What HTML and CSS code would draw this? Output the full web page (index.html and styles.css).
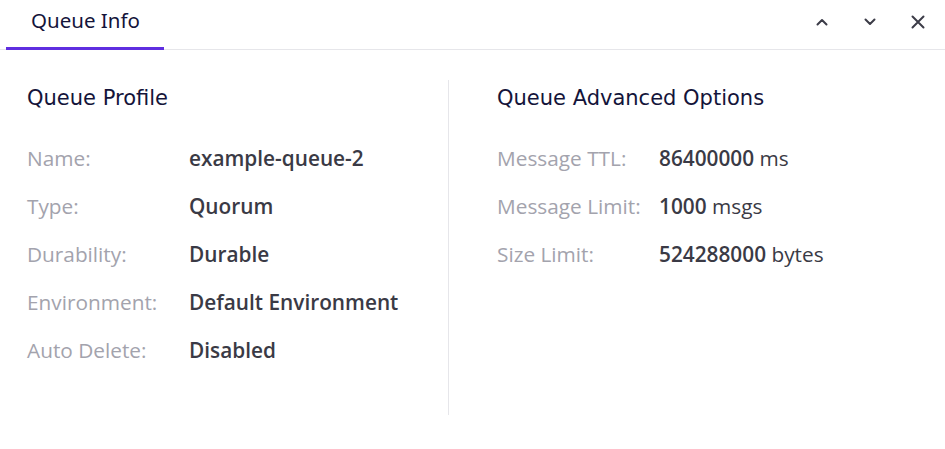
FILE: index.html
```html
<!DOCTYPE html>
<html>
<head>
<meta charset="utf-8">
<link rel="stylesheet" href="styles.css">
</head>
<body>
<div class="panel">
  <div class="tabbar">
    <div class="tab">Queue Info</div>
    <div class="actions">
      <button class="icon-btn" aria-label="Up">
        <svg width="16" height="16" viewBox="0 0 16 16"><path d="M3.5 10.5 L8 6 L12.5 10.5" fill="none" stroke="#3c3c48" stroke-width="2" stroke-linecap="round" stroke-linejoin="round"/></svg>
      </button>
      <button class="icon-btn" aria-label="Down">
        <svg width="16" height="16" viewBox="0 0 16 16"><path d="M3.5 5.5 L8 10 L12.5 5.5" fill="none" stroke="#3c3c48" stroke-width="2" stroke-linecap="round" stroke-linejoin="round"/></svg>
      </button>
      <button class="icon-btn" aria-label="Close">
        <svg width="16" height="16" viewBox="0 0 16 16"><path d="M2.5 2.5 L13.5 13.5 M13.5 2.5 L2.5 13.5" fill="none" stroke="#3c3c48" stroke-width="2" stroke-linecap="round"/></svg>
      </button>
    </div>
  </div>
  <div class="content">
    <section class="col col-left">
      <h2 class="heading">Queue Profile</h2>
      <dl class="rows">
        <div class="row"><dt>Name:</dt><dd><b>example-queue-2</b></dd></div>
        <div class="row"><dt>Type:</dt><dd><b>Quorum</b></dd></div>
        <div class="row"><dt>Durability:</dt><dd><b>Durable</b></dd></div>
        <div class="row"><dt>Environment:</dt><dd><b>Default Environment</b></dd></div>
        <div class="row"><dt>Auto Delete:</dt><dd><b>Disabled</b></dd></div>
      </dl>
    </section>
    <div class="divider"></div>
    <section class="col col-right">
      <h2 class="heading">Queue Advanced Options</h2>
      <dl class="rows">
        <div class="row"><dt>Message TTL:</dt><dd><b>86400000</b> ms</dd></div>
        <div class="row"><dt>Message Limit:</dt><dd><b>1000</b> msgs</dd></div>
        <div class="row"><dt>Size Limit:</dt><dd><b>524288000</b> bytes</dd></div>
      </dl>
    </section>
  </div>
</div>
</body>
</html>
```
FILE: styles.css
```css
* { box-sizing: border-box; }
html, body { margin: 0; padding: 0; background: #fff; }
body { font-family: "Open Sans", "Noto Sans", sans-serif; color: #3a3a45; }

.panel { width: 945px; height: 449px; }

.tabbar {
  display: flex;
  align-items: stretch;
  justify-content: space-between;
  height: 50px;
  border-bottom: 1px solid #e6e6ea;
}
.tab {
  margin-left: 6px;
  width: 158px;
  padding-top: 6px;
  padding-left: 25px;
  font-family: "Noto Sans", sans-serif;
  font-size: 20.5px;
  color: #14143a;
  border-bottom: 3px solid #5f2ee0;
  margin-bottom: -1px;
}
.actions {
  display: flex;
  align-items: flex-start;
  gap: 32px;
  padding-top: 14px;
  padding-right: 19px;
}
.icon-btn {
  border: 0; background: none; padding: 0; margin: 0;
  width: 16px; height: 16px; display: block;
}
.icon-btn svg { display: block; }

.content {
  display: flex;
  padding-top: 30px;
}
.col { padding-top: 5px; }
.col-left { width: 448px; padding-left: 27px; }
.col-right { flex: 1; padding-left: 48px; }
.divider { width: 1px; background: #e6e6ea; height: 335px; }

.heading {
  margin: 0;
  font-family: "DejaVu Sans", sans-serif;
  font-weight: normal;
  font-size: 21px;
  line-height: 26px;
  color: #14143a;
}
.rows { margin: 33px 0 0 0; display: flex; flex-direction: column; gap: 20px; }
.row { display: flex; font-size: 20.8px; line-height: 28px; }
.row dt { width: 162px; color: #a3a3ad; }
.row dd { margin: 0; color: #3a3a45; }
.row b { font-weight: 600; }
```
